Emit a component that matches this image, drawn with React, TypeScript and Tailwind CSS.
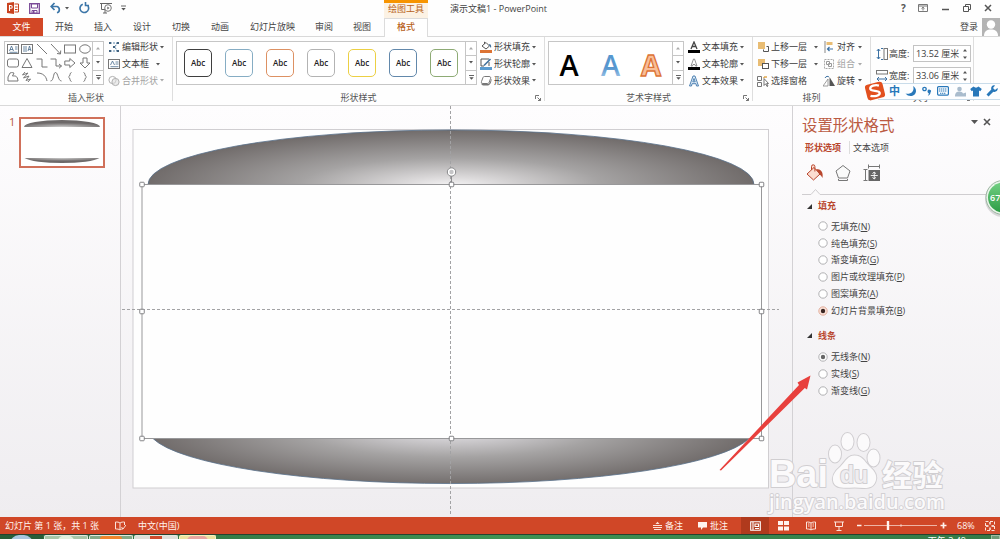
import React from "react";

const FONT = "font-['Open_Sans','Noto_Sans_CJK_SC',sans-serif]";

type IconProps = { w?: number; h?: number; vb?: string; className?: string; children: React.ReactNode };
function Ico({ w = 12, h = 12, vb, className = "", children }: IconProps) {
  return (
    <svg width={w} height={h} viewBox={vb ?? `0 0 ${w} ${h}`} fill="none" stroke="#777" strokeWidth="1" className={"block shrink-0 " + className}>
      {children}
    </svg>
  );
}

function Caret({ c = "#555" }: { c?: string }) {
  return (
    <svg width="4" height="3" viewBox="0 0 4 3" className="block shrink-0">
      <path d="M0 0h4L2 2.4z" fill={c} />
    </svg>
  );
}

type ItemProps = { icon: React.ReactNode; label: string; caret?: boolean; dim?: boolean; gap?: string };
function Item({ icon, label, caret = true, dim = false, gap = "ml-[2px]" }: ItemProps) {
  return (
    <div className={"flex h-[16.800px] items-center " + (dim ? "text-[#a3a3a3]" : "text-[#3c3c3c]")}>
      {icon}
      <span className="ml-[2px] whitespace-nowrap leading-[16px]">{label}</span>
      {caret && (
        <span className={gap}>
          <Caret c={dim ? "#aaa" : "#555"} />
        </span>
      )}
    </div>
  );
}

function Scroller() {
  return (
    <div className="flex w-[11px] shrink-0 flex-col border-l border-[#c6c6c6]">
      <div className="flex flex-1 items-center justify-center border-b border-[#c6c6c6]">
        <svg width="4" height="3"><path d="M0 2.500h4L2 0z" fill="#aaa" /></svg>
      </div>
      <div className="flex flex-1 items-center justify-center border-b border-[#c6c6c6]"><Caret /></div>
      <div className="flex flex-1 items-center justify-center">
        <svg width="5" height="5"><path d="M0 .5h5" stroke="#555" strokeWidth=".9" /><path d="M.3 2.200h4.400L2.500 4.700z" fill="#555" /></svg>
      </div>
    </div>
  );
}

function Launcher() {
  return (
    <svg width="6" height="6" viewBox="0 0 6 6" fill="none" stroke="#666" strokeWidth=".9" className="block">
      <path d="M.5 4V.5H4M2.500 2.500l3 3M5.500 3v2.500H3" />
    </svg>
  );
}

type GroupProps = { w: string; label: string; launcher?: boolean; children: React.ReactNode };
function Group({ w, label, launcher = false, children }: GroupProps) {
  return (
    <div className={"flex shrink-0 flex-col pt-[2px] " + w}>
      <div className="flex h-[52px] items-start">{children}</div>
      <div className="mt-[1px] grid h-[12px] grid-cols-[9px_1fr_9px] items-center text-center text-[#555]">
        <span />
        <span className="leading-[12px]">{label}</span>
        {launcher && <Launcher />}
      </div>
    </div>
  );
}

function Divider() {
  return <div className="h-[64px] w-px shrink-0 self-start bg-[#dedede]" />;
}

function ShapeGallery() {
  const shapes = [
    <g key="a"><rect x=".5" y="1.500" width="11" height="9" /><path d="M2.500 8l2-5 2 5M3 6.500h3M8 4h2.500M8 6h2.500M2.500 9.300h8" stroke="#476c8e" strokeWidth=".8" /></g>,
    <g key="b"><rect x=".5" y="1.500" width="11" height="9" /><path d="M3 3v6M5 3v6M7 8l1.500-5L10 8M7.500 6.500h2" stroke="#476c8e" strokeWidth=".8" /></g>,
    <path key="c" d="M1 1l10 10" />,
    <path key="d" d="M1 1l9.500 10M7 10.500l3.500.5.2-3.500" />,
    <rect key="e" x=".5" y="2" width="11" height="8" />,
    <ellipse key="f" cx="6" cy="6" rx="5.300" ry="4.200" />,
    <rect key="g" x=".5" y="2" width="11" height="8" rx="2" />,
    <path key="h" d="M6 1.500L11 10.500H1z" />,
    <path key="i" d="M.5 2H6v8h5.500" />,
    <path key="j" d="M.5 2H6v7h5.500M9 7l2.500 2L9 11.300" />,
    <path key="k" d="M.8 4h5V1.500L11 6l-5.200 4.500V8h-5z" />,
    <path key="l" d="M4 1v5H1l5 5 5-5H8V1z" />,
    <path key="m" d="M3 2c2-1 4 0 4 0L5.500 5c2 0 5-1 5.500 5H1V6z" />,
    <path key="n" d="M4 1L1.500 4 7 2 2.500 7 8 5 5 9.500 9.500 8 7 11" />,
    <path key="o" d="M1 2c6 0 9 3 10 8" />,
    <path key="p" d="M.5 10C4 10 3 1.500 5.500 1.500S8 10 11.500 10" />,
    <path key="q" d="M7.500 1.500C5.500 1.500 6.500 5.500 4.500 6c2 .5 1 4.500 3 4.500" />,
    <path key="r" d="M4.500 1.500c2 0 1 4 3 4.500-2 .5-1 4.500-3 4.500" />,
  ];
  return (
    <div className="ml-[4px] mt-[2px] flex h-[44px] w-[100px] border border-[#c6c6c6] bg-white">
      <div className="grid flex-1 grid-cols-6 grid-rows-3 place-items-center pl-[1px]">
        {shapes.map((s, i) => (
          <Ico key={i} vb="0 0 12 12" w={12} h={12}>{s}</Ico>
        ))}
      </div>
      <Scroller />
    </div>
  );
}

const PRESETS = ["border-[#3f3f3f]", "border-[#86adc4]", "border-[#dd9163]", "border-[#b3b3b3]", "border-[#ecd044]", "border-[#6288ab]", "border-[#8eab75]"];

function RibbonBody() {
  return (
    <div className="flex h-[70px] shrink-0 border-y border-[#d9d9d9] bg-[#fefefe] text-[9px]">
      <Group w="w-[172px]" label="插入形状">
        <ShapeGallery />
        <div className="ml-[4px] flex flex-col">
          <Item label="编辑形状" icon={<Ico><path d="M2 2h7l-2 4 2 4H3" stroke="#5d86a8" strokeDasharray="2 1" /><path d="M1 1h2v2H1zM9 1h2v2H9zM9 9h2v2H9zM1 9h2v2H1zM5 5h2v2H5z" fill="#41627f" stroke="none" /></Ico>} />
          <Item label="文本框" gap="ml-[7px]" icon={<Ico><rect x=".5" y="1.500" width="11" height="9" /><path d="M2.500 7l2-4 2 4M7.500 4h3M7.500 6h3M2.500 8.700h8" stroke="#476c8e" strokeWidth=".8" /></Ico>} />
          <Item label="合并形状" dim icon={<Ico><circle cx="4.500" cy="5" r="3.600" stroke="#b0b0b0" /><circle cx="7.500" cy="7" r="3.600" stroke="#b0b0b0" fill="#ddd" fillOpacity=".6" /></Ico>} />
        </div>
      </Group>
      <Divider />
      <Group w="w-[371px]" label="形状样式" launcher>
        <div className="ml-[3px] mt-[2px] flex h-[44px] w-[301px] border border-[#c6c6c6] bg-white">
          <div className="flex flex-1 items-center gap-[13px] pl-[7px]">
            {PRESETS.map((p) => (
              <div key={p} className={"flex size-[28px] items-center justify-center rounded-[5px] border text-[8px] font-semibold text-[#222] " + p}>Abc</div>
            ))}
          </div>
          <Scroller />
        </div>
        <div className="ml-[3px] flex flex-col">
          <Item label="形状填充" icon={<Ico><path d="M2 5l4-3.500L9.500 5 6 8zM4.500 3V.8" stroke="#555" /><path d="M9 3c2 0 2.500 2 2 4L9.500 5z" fill="#41719c" stroke="none" /><path d="M0 9h12v3H0z" fill="#dc7334" stroke="none" /></Ico>} />
          <Item label="形状轮廓" icon={<Ico><path d="M9 1H1v7h3M9 4v4" stroke="#555" /><path d="M4 7.500L10.500 1" stroke="#41719c" strokeWidth="1.600" /><path d="M0 9h12v3H0z" fill="#5a9bd0" stroke="none" /></Ico>} />
          <Item label="形状效果" icon={<Ico><path d="M4.500 1.500h4.500c1.500 0 2 .8 1.500 2L9.300 7c-.4 1-1 1.500-2 1.500H3c-1.500 0-2-1-1.500-2L3 2.500c.3-.7.700-1 1.500-1z" fill="#fff" /><path d="M1.300 7.500C1 9.500 2 10.500 3.500 10.500H8c2 0 4-4 3.500-7l-1.700 4c-.5 1-1.300 1.500-2.300 1.500H3c-1 0-1.500-.5-1.700-1.500z" fill="#777" stroke="none" /></Ico>} />
        </div>
      </Group>
      <Divider />
      <Group w="w-[207px]" label="艺术字样式" launcher>
        <div className="ml-[3px] mt-[2px] flex h-[44px] w-[136px] border border-[#c6c6c6] bg-white">
          <svg width="123" height="42" viewBox="0 0 123 42" className="block shrink-0 font-['Open_Sans',sans-serif] text-[29px]" textAnchor="middle" fontWeight="600">
            <defs>
              <linearGradient id="blueA" x1="0" y1="0" x2="0" y2="1"><stop offset=".6" stopColor="#5797cf" /><stop offset=".8" stopColor="#8fbbe2" /></linearGradient>
            </defs>
            <text x="20" y="33.500" fill="#000">A</text>
            <text x="61.500" y="33.500" fill="url(#blueA)">A</text>
            <text x="102" y="33.500" fill="#f8be98" stroke="#dd7335" strokeWidth="1.300" fontWeight="700">A</text>
          </svg>
          <Scroller />
        </div>
        <div className="ml-[4px] flex flex-col">
          <Item label="文本填充" icon={<Ico><path d="M3 8l3-7 3 7M4 5.500h4" stroke="#444" strokeWidth="1.300" /><path d="M0 9h12v3H0z" fill="#000" stroke="none" /></Ico>} />
          <Item label="文本轮廓" icon={<Ico><path d="M3 8l2.500-7h1L9 8H7.500L7 6.500H5L4.500 8z" stroke="#777" strokeWidth=".8" /><path d="M0 9h12v3H0z" fill="#000" stroke="none" /></Ico>} />
          <Item label="文本效果" icon={<Ico><path d="M1.500 11L5 1h2l3.500 10H8.500L8 8.700H4L3.500 11zM4.800 6.800h2.400L6 3.500z" stroke="#3f77ab" fill="#e3eef8" strokeWidth=".9" /></Ico>} />
        </div>
      </Group>
      <Divider />
      <Group w="w-[117px]" label="排列">
        <div className="ml-[4px] flex flex-col">
          <Item label="上移一层" gap="ml-[7px]" icon={<Ico><path d="M1 1h7v7H1z" fill="#e9bd74" stroke="none" /><path d="M9.500 5.500h2v5h-5v-2" stroke="#555" /></Ico>} />
          <Item label="下移一层" gap="ml-[7px]" icon={<Ico><path d="M1 1h7v7H1z" fill="#e9bd74" stroke="none" /><rect x="5.500" y="5.500" width="6" height="5" fill="#fff" stroke="#555" /></Ico>} />
          <Item label="选择窗格" caret={false} icon={<Ico><path d="M.5 1.500h4v4h-4zM.5 7.500h4v4h-4z" /><path d="M7 2h3M7 2v1" stroke="#e0a850" strokeWidth="1.500" /><path d="M7 3.500v7l1.700-1.700 1.300 2.700 1-.5-1.300-2.500H11.500z" fill="#fff" stroke="#555" strokeWidth=".8" /></Ico>} />
        </div>
        <div className="ml-[5px] flex flex-col">
          <Item label="对齐" gap="ml-[3px]" icon={<Ico><path d="M2 0v12" stroke="#888" /><path d="M3.500 1h6v3h-6z" fill="#e9bd74" stroke="none" /><path d="M10 8H4.500M6.500 6l-2 2 2 2" stroke="#3c71a3" strokeWidth="1.200" /></Ico>} />
          <Item label="组合" dim gap="ml-[3px]" icon={<Ico><rect x="1.500" y="1.500" width="9" height="9" stroke="#aaa" strokeDasharray="2 1" /><path d="M3.500 3.500h3v3h-3zM5.500 5.500h3v3h-3z" stroke="#999" /></Ico>} />
          <Item label="旋转" gap="ml-[3px]" icon={<Ico><path d="M5 4v7H0z" stroke="#888" strokeWidth=".8" /><path d="M6.500 2v9H12z" fill="#555" stroke="none" /><path d="M2 3c1-2 3-2 4-1" stroke="#3c71a3" /></Ico>} />
        </div>
      </Group>
      <Divider />
      <Group w="w-[102px]" label="大小" launcher>
        <div className="ml-[5px] mt-[6px] flex flex-col gap-[5px]">
          {[["高度:", "13.52 厘米"], ["宽度:", "33.06 厘米"]].map(([k, v], i) => (
            <div key={k} className="flex h-[17px] items-center text-[#3c3c3c]">
              {i === 0 ? (
                <Ico><path d="M2.500 1v10M.8 3l1.700-2 1.700 2M.8 9l1.700 2 1.700-2M5 .5h2M5 11.500h2" stroke="#3c71a3" /><rect x="8" y=".5" width="3.500" height="11" /></Ico>
              ) : (
                <Ico><rect x=".5" y=".5" width="11" height="3.500" /><path d="M1 9h10M3 7L1 9l2 2M9 7l2 2-2 2" stroke="#3c71a3" /></Ico>
              )}
              <span className="ml-[1px] w-[24px]">{k}</span>
              <div className="flex h-[17px] w-[58px] items-center justify-between border border-[#c3c3c3] bg-white pl-[2px] pr-[3px]">
                <span className="whitespace-nowrap text-[9px]">{v}</span>
                <svg width="4" height="10" viewBox="0 0 4 10"><path d="M0 2.500h4L2 0zM0 7.500h4L2 10z" fill="#555" /></svg>
              </div>
            </div>
          ))}
        </div>
      </Group>
      <Divider />
    </div>
  );
}

function TitleBar() {
  return (
    <div className="flex h-[18px] shrink-0 items-start text-[9px]">
      <div className="flex h-[16px] w-[384px] items-center pl-[7px]">
        <Ico w={12} h={12}><path d="M0 1l7-1v12L0 11z" fill="#c9421f" stroke="none" /><path d="M7.500 2h4v8h-4M8 5h2.500M8 7.500h2.500" stroke="#c9421f" /><path d="M2.500 9V3.500h1.300a1.400 1.400 0 010 2.800H2.500" stroke="#fff" strokeWidth="1.100" /></Ico>
        <Ico w={11} h={11} className="ml-[10px]"><path d="M.7.7h9.600v9.600H.7z" stroke="#7a4a97" strokeWidth="1.300" /><path d="M2.500 1h6v4h-6zM3 7.500h5V10H3z" fill="#fff" stroke="#7a4a97" /><path d="M4 8h1.500v2H4z" fill="#7a4a97" stroke="none" /></Ico>
        <Ico w={12} h={12} className="ml-[10px]"><path d="M1.500 4.500H7a3.300 3.300 0 010 6.300M4.500 1L1.200 4.500 4.500 8" stroke="#3c76a8" strokeWidth="1.700" /></Ico>
        <span className="ml-[3px]"><Caret /></span>
        <Ico w={11} h={12} className="ml-[10px]"><path d="M3.800 2.200A4.300 4.300 0 109 4M6.500 0v3.500H10" stroke="#3c76a8" strokeWidth="1.600" /></Ico>
        <Ico w={13} h={12} className="ml-[10px]"><path d="M0 1.500h12M1.500 2v5.500H5M5 8v3M3 11h4" stroke="#666" /><circle cx="8" cy="6" r="3.300" stroke="#777" fill="#fff" /><path d="M7.300 4.500v3L9.500 6z" fill="#666" stroke="none" /></Ico>
        <svg width="5" height="6" className="ml-[8px] block"><path d="M0 1h5" stroke="#555" strokeWidth=".9" /><path d="M.3 3h4.400L2.500 5.500z" fill="#555" /></svg>
      </div>
      <div className="h-[18px] w-[44px] border-t-[3px] border-[#f79400] bg-[#fcf2e4] text-center leading-[12px] text-[#b8621b]">绘图工具</div>
      <span className="ml-[22px] flex-1 leading-[17px] text-[#444]">演示文稿1 - PowerPoint</span>
      <div className="flex h-[16px] items-center text-[#555]">
        <span className="w-[17px] text-[10px] font-bold leading-[16px]">?</span>
        <Ico w={10} h={8}><path d="M.5.5h9v7h-9zM.5 2h9M5 6.500V3.200M3.500 4.600L5 3.200l1.500 1.400" /></Ico>
        <Ico w={7} h={8} className="ml-[14px]"><path d="M0 5.500h7" strokeWidth="1.500" stroke="#555" /></Ico>
        <Ico w={8} h={8} className="ml-[14px]"><path d="M.5 2.500h5v5h-5zM2.500 2V.5h5v5H6" stroke="#555" /></Ico>
        <Ico w={8} h={8} className="ml-[13px] mr-[8px]"><path d="M1 1l6 6M7 1L1 7" strokeWidth="1.500" stroke="#555" /></Ico>
      </div>
    </div>
  );
}

function Tabs() {
  return (
    <div className="flex h-[18px] shrink-0 items-center text-[9px] leading-[16px] text-[#444]">
      <div className="h-[18px] w-[43px] bg-[#d24726] text-center leading-[17px] text-white">文件</div>
      <div className="flex w-[341px] pl-[12px]">
        <div className="flex gap-[21px]">
          {["开始", "插入", "设计", "切换", "动画"].map((t) => <span key={t}>{t}</span>)}
        </div>
        <div className="ml-[21px] flex gap-[20px]">
          {["幻灯片放映", "审阅", "视图"].map((t) => <span key={t}>{t}</span>)}
        </div>
      </div>
      <div className="z-10 -mb-[1px] h-[19px] w-[44px] border-x border-t border-[#dcdcdc] bg-white text-center font-medium leading-[16px] text-[#b8621b]">格式</div>
      <span className="ml-auto">登录</span>
      <svg width="18" height="18" viewBox="0 0 18 18" className="ml-[4px] block">
        <path d="M0 0h18v18H0z" fill="#b4b4b4" /><circle cx="9" cy="6.500" r="4.200" fill="#fff" /><path d="M2 18c0-5 3-6.500 7-6.500s7 1.500 7 6.500z" fill="#fff" />
      </svg>
    </div>
  );
}

function Thumbnail() {
  return (
    <aside className="flex w-[121px] shrink-0 items-start border-r border-[#d3d1d4] pl-[9px] pt-[11px]">
      <span className="w-[10px] text-[11px] leading-[10px] text-[#b5573e]">1</span>
      <div className="h-[51px] w-[86px] border-2 border-[#d0705a] bg-white">
        <svg width="82" height="47" viewBox="0 0 82 47" className="block">
          <defs>
            <radialGradient id="ta" cx=".5" cy="1" r=".6"><stop offset="0" stopColor="#ccc" /><stop offset="1" stopColor="#6d6969" /></radialGradient>
            <radialGradient id="tb" cx=".5" cy="0" r=".6"><stop offset="0" stopColor="#ccc" /><stop offset="1" stopColor="#6d6969" /></radialGradient>
          </defs>
          <path d="M3 8A38 7 0 0179 8z" fill="url(#ta)" />
          <path d="M3.500 39A39 7 0 0078.500 39z" fill="url(#tb)" />
        </svg>
      </div>
    </aside>
  );
}

function SlideCanvas() {
  const handles = [[142, 184.5], [451.5, 184.5], [761.5, 184.5], [142, 311.5], [761.5, 311.5], [142, 438.5], [451.5, 438.5], [761.5, 438.5]];
  return (
    <svg width="671" height="411" viewBox="121 106 671 411" className="block shrink-0">
      <defs>
        <radialGradient id="ga" gradientUnits="userSpaceOnUse" cx="0" cy="0" r="1" gradientTransform="translate(451 186) scale(303 56)">
          <stop offset="0" stopColor="#f6f5f6" /><stop offset=".15" stopColor="#dddbdc" /><stop offset=".5" stopColor="#a5a3a3" /><stop offset="1" stopColor="#716c6b" />
        </radialGradient>
        <radialGradient id="gb" gradientUnits="userSpaceOnUse" cx="0" cy="0" r="1" gradientTransform="translate(451 429) scale(303 56)">
          <stop offset="0" stopColor="#f6f5f6" /><stop offset=".2" stopColor="#cfcdd0" /><stop offset=".5" stopColor="#a5a3a3" /><stop offset="1" stopColor="#716c6b" />
        </radialGradient>
      </defs>
      <rect x="133" y="129.500" width="635.500" height="358.500" fill="#fefefe" stroke="#d0ced1" />
      <path d="M148 184.500A303 54.500 0 01754 184.500z" fill="url(#ga)" />
      <path d="M148 184.500A303 54.500 0 01754 184.500" fill="none" stroke="#58708a" strokeWidth=".8" />
      <path d="M153 438.500A303 55 0 00749 438.500z" fill="url(#gb)" />
      <path d="M153 438.500A303 55 0 00749 438.500" fill="none" stroke="#58708a" strokeWidth=".8" />
      <rect x="142" y="184.500" width="619.500" height="254" fill="#fefefe" stroke="#98989a" />
      <path d="M450.500 106v410" stroke="#a2a2a4" strokeDasharray="3 2" />
      <path d="M122 309.500h657" stroke="#a2a2a4" strokeDasharray="3 2" />
      <path d="M451.500 176v6" stroke="#8d8d8f" />
      <circle cx="451.500" cy="172" r="4.200" fill="#c5c5c7" stroke="#8a8a8c" strokeWidth="1" />
      <circle cx="451.500" cy="172" r="2.900" fill="none" stroke="#fff" strokeWidth="1.400" />
      {handles.map(([x, y], i) => (
        <rect key={i} x={x - 2.25} y={y - 2.25} width="4.500" height="4.500" rx=".8" fill="#fff" stroke="#77777a" strokeWidth=".9" />
      ))}
    </svg>
  );
}

type Opt = { t: string; k: string; on?: "hot" | "plain" };
function Radios({ items }: { items: Opt[] }) {
  return (
    <div className="flex flex-col pl-[25px]">
      {items.map((o) => (
        <div key={o.t} className="flex h-[16.9px] items-center text-[#444]">
          <svg width="10" height="10" viewBox="0 0 10 10" className="mr-[3px] block shrink-0">
            <circle cx="5" cy="5" r="4.200" fill={o.on === "hot" ? "#fbe3da" : "#fff"} stroke={o.on === "hot" ? "#e0a793" : "#a9a9ab"} strokeWidth=".9" />
            {o.on && <circle cx="5" cy="5" r="2.200" fill={o.on === "hot" ? "#3a2622" : "#666"} />}
          </svg>
          <span className="whitespace-nowrap">{o.t}(<u className="underline-offset-1">{o.k}</u>)</span>
        </div>
      ))}
    </div>
  );
}

function SectionHead({ t }: { t: string }) {
  return (
    <div className="flex h-[14px] items-center pl-[14px] font-bold text-[#b9472e]">
      <svg width="5" height="5" className="mr-[6px] block"><path d="M5 0v5H0z" fill="#333" /></svg>
      {t}
    </div>
  );
}

function FormatPane() {
  return (
    <aside className="flex min-w-0 flex-1 flex-col border-l border-[#d3d1d4] text-[9px]">
      <div className="mt-[10px] flex h-[20px] items-center pl-[9px]">
        <span className="text-[15.4px] leading-[20px] text-[#bb5a42]">设置形状格式</span>
        <svg width="7" height="4" className="mb-[8px] ml-auto block"><path d="M0 0h7L3.500 4z" fill="#555" /></svg>
        <Ico w={8} h={8} className="mb-[8px] ml-[5px] mr-[9px]"><path d="M1 1l6 6M7 1L1 7" stroke="#555" strokeWidth="1.600" /></Ico>
      </div>
      <div className="mt-[5px] flex h-[13px] items-center pl-[12px] leading-[13px]">
        <span className="font-bold text-[#b9472e]">形状选项</span>
        <span className="ml-[8px] border-l border-[#ddd] pl-[3px] text-[#444]">文本选项</span>
      </div>
      <div className="mt-[9px] flex h-[20px] items-center pl-[13px]">
        <Ico w={18} h={18}><path d="M1 10l7-6.500L14 10l-6.500 6zM5.500 6V2.500a1.700 1.700 0 013.400 0v5" stroke="#b9472e" fill="#fbdcd0" /><path d="M10 5c5 0 7.500 3 6.500 9-1-2-2-3-3-3.500z" fill="#b9472e" stroke="none" /></Ico>
        <Ico w={16} h={18} className="ml-[11px]"><path d="M8 1.500l7 5.500-2.500 7h-9L1 7z" fill="#fafafa" /><path d="M3.500 16.500v-1.500M12.500 16.500v-1.500M3.500 16.500h9" /></Ico>
        <Ico w={17} h={18} className="ml-[12px]"><path d="M2.500 5.500v11M.5 5.500h4M.5 16.500h4M5.500 2.500h11M5.500.5v4M16.500.5v4" /><path d="M5.500 6H17v11H5.500z" fill="#666" stroke="none" /><path d="M11.250 8v7M7.750 11.500h7M9.500 9.700l1.700-1.700L13 9.700M9.500 13.300l1.700 1.700 1.800-1.700" stroke="#fff" strokeWidth=".9" /></Ico>
      </div>
      <svg width="208" height="9" viewBox="0 0 208 9" className="mt-[4px] block"><path d="M9 7.500h9l4.500-5 4.500 5h181" fill="none" stroke="#cfcdd0" /></svg>
      <div className="mt-[3px]"><SectionHead t="填充" /></div>
      <div className="mt-[5px]">
        <Radios items={[{ t: "无填充", k: "N" }, { t: "纯色填充", k: "S" }, { t: "渐变填充", k: "G" }, { t: "图片或纹理填充", k: "P" }, { t: "图案填充", k: "A" }, { t: "幻灯片背景填充", k: "B", on: "hot" }]} />
      </div>
      <div className="mt-[9px]"><SectionHead t="线条" /></div>
      <div className="mt-[6px]">
        <Radios items={[{ t: "无线条", k: "N", on: "plain" }, { t: "实线", k: "S" }, { t: "渐变线", k: "G" }]} />
      </div>
    </aside>
  );
}

function StatusBar() {
  return (
    <div className="flex h-[17px] shrink-0 items-center bg-[#d04727] text-[9px] leading-[16px] text-[#fff3ee]">
      <span className="w-[110px] whitespace-nowrap pl-[5px]">幻灯片 第 1 张，共 1 张</span>
      <Ico w={11} h={10} className="ml-[5px]"><path d="M5 9V2C4 1 2 1 .5 1v7C2 8 4 8 5 9c1-1 2-1 3-1M5 2c1-1 3-1 4.500-1v3M6.500 6l1.500 2 3-4" stroke="#fbe3da" /></Ico>
      <span className="ml-[12px]">中文(中国)</span>
      <div className="ml-auto flex h-full items-center">
        <Ico w={9} h={9}><path d="M0 4.500h9M0 6.500h9M1 8.500h7" stroke="#fbe3da" /><path d="M2.500 3L4.500.8 6.500 3z" fill="#fbe3da" stroke="none" /></Ico>
        <span className="ml-[3px]">备注</span>
        <svg width="9" height="9" className="ml-[15px] block"><path d="M0 1h9v5.500H5L3 9V6.500H0z" fill="#fff3ee" /></svg>
        <span className="ml-[3px]">批注</span>
        <div className="ml-[13px] flex h-full w-[28px] items-center justify-center bg-[#b03a1d]">
          <Ico w={11} h={10}><path d="M.7.7h9.600v8.600H.7zM3 .7v8.600M5 3h3.500v2.500H5zM5 7.500h4" stroke="#fff" strokeWidth="1.100" /></Ico>
        </div>
        <svg width="11" height="10" className="ml-[9px] block"><path d="M0 0h5v4H0zM6 0h5v4H6zM0 5.500h5v4H0zM6 5.500h5v4H6z" fill="#fff3ee" /></svg>
        <Ico w={10} h={10} className="ml-[17px]"><path d="M5 9V2C4 1 2 1 .5 1v7C2 8 4 8 5 9c1-1 3-1 4.500-1V1C8 1 6 1 5 2M2 3h1.500M2 5h1.500M6.500 3H8M6.500 5H8" stroke="#fbe3da" /></Ico>
        <Ico w={10} h={10} className="ml-[18px]"><path d="M0 1h10M1.500 1v4.500h7V1M5 6v3M2.500 9.500h5" stroke="#fbe3da" /></Ico>
        <svg width="90" height="11" viewBox="0 0 90 11" className="ml-[13px] block" fill="none" stroke="#fff3ee">
          <path d="M0 5.500h4.500M83.500 5.500h6M86.500 2.500v6" strokeWidth="1.700" />
          <path d="M7 5.500h73M44 4v3" strokeWidth=".8" opacity=".8" />
          <path d="M31 1v9" strokeWidth="2.400" />
        </svg>
        <span className="ml-[10px] w-[28px]">68%</span>
        <Ico w={10} h={10} className="mr-[5px]"><path d="M.5.5h9v9h-9z" stroke="#fbe3da" strokeDasharray="3 1.500" /><path d="M5 1v2.500M5 9V6.500M1 5h2.500M9 5H6.500" stroke="#fff" strokeWidth="1.300" /></Ico>
      </div>
    </div>
  );
}

function TaskBar() {
  const btn = "h-[6px] w-[44px] overflow-hidden rounded-t-[2px] border-x border-t border-[#dfe9df] px-[13px] ";
  return (
    <div className="flex h-[5px] shrink-0 gap-px overflow-hidden border-t border-[#26422d] bg-gradient-to-r from-[#2e6a3e] via-[#3f9354] to-[#347947]">
      <div className="h-[5px] w-[43px] bg-[#285d38] px-[10px]"><div className="h-[18px] rounded-full bg-[#a9c6de]" /></div>
      <div className={btn + "bg-[#a8c6a8]"}><div className="h-[10px] rounded-full bg-[#e1f0de]" /></div>
      <div className={btn + "bg-[#83a987]"}><div className="ml-[-3px] h-[10px] w-[22px] rounded-[3px] bg-[#f0842c]" /></div>
      <div className={btn + "bg-[#dedfd9]"}><div className="ml-[2px] h-[10px] w-[12px] bg-[#cf4b2c]" /></div>
      <div className="h-[6px] w-[37px] rounded-t-[2px] border-x border-t border-[#f6f2bf] bg-[#ece3a0] px-[7px]"><div className="h-[10px] rounded-full bg-[#e8a5a0]" /></div>
      <div className="ml-auto mr-[24px] pt-[1px] text-[9px] leading-[9px] text-white">下午 3:49</div>
      <div className="h-[6px] w-[9px] border border-[#9fbfa5] bg-[#6d9a77]" />
    </div>
  );
}

function ImeBar() {
  const b = "#2878ba";
  return (
    <div className="absolute left-[864px] top-[80px] flex h-[22px] w-[136px] items-center">
      <div className="absolute inset-x-0 left-[14px] top-[3px] h-[17px] border-y border-[#c9dcea] bg-[#fdfeff]" />
      <svg width="22" height="22" viewBox="0 0 22 22" className="relative block shrink-0">
        <rect x="2" y="3" width="18" height="16" rx="3" fill="#e2501f" transform="rotate(-14 11 11)" />
        <path d="M15.500 6C12 4.500 6.500 5.500 6.500 8.300c0 3 9 2 9 5 0 3-6 3.400-9.500 2" fill="none" stroke="#fff" strokeWidth="2.300" transform="rotate(-6 11 11)" />
      </svg>
      <div className="relative flex items-center">
        <span className="ml-[3px] w-[11px] text-[11px] font-bold leading-[20px] text-[#2878ba]">中</span>
        <svg width="12" height="12" viewBox="0 0 12 12" className="ml-[5px] block"><path d="M8 1c2 5-2 9-7.500 7.500C4 13 11 11 11 6 11 4 10 2 8 1z" fill={b} /></svg>
        <svg width="10" height="10" viewBox="0 0 10 10" className="ml-[5px] block"><circle cx="2.500" cy="3" r="1.700" fill="none" stroke={b} strokeWidth="1.300" /><path d="M5.500 5.200a1.700 1.700 0 113 1.200C8.500 8 7.500 9.200 5.800 9.700c.8-1 1.200-1.700 1-2.500C6 7 5.500 6.300 5.500 5.200z" fill={b} /></svg>
        <svg width="12" height="10" viewBox="0 0 12 10" className="ml-[5px] block"><rect x=".6" y=".6" width="10.800" height="8.500" rx="1" fill="#fff" stroke={b} strokeWidth="1.200" /><path d="M2 3h8M2 5h8M3 7.200h6" stroke={b} strokeDasharray="1.300 .6" strokeWidth="1.100" /></svg>
        <svg width="11" height="11" viewBox="0 0 11 11" className="ml-[6px] block"><circle cx="4.500" cy="3" r="2.300" fill="#a9bccd" /><path d="M0 10.500c0-4 2-5 4.500-5s3 1 3.500 2l3-1v4z" fill="#a9bccd" /></svg>
        <svg width="12" height="11" viewBox="0 0 12 11" className="ml-[4px] block"><path d="M3.500.5C5 2 7 2 8.500.5L11.800 3l-1.500 2.300L9 4.600v5.900H3V4.600l-1.300.7L.2 3z" fill={b} /></svg>
        <svg width="12" height="12" viewBox="0 0 12 12" className="ml-[4px] block"><path d="M11.500 3L9 5 7 3l2-2.500C6.500-.5 4.500 2 5.300 4.500L.5 9.500l2 2L7.300 6.700C10 7.500 12.500 5.500 11.500 3z" fill={b} /></svg>
      </div>
    </div>
  );
}

function Overlay() {
  return (
    <svg width="300" height="350" viewBox="700 170 300 350" className="pointer-events-none absolute left-[700px] top-[170px] block">
      <defs>
        <linearGradient id="gr" x1="0" y1="0" x2="0" y2="1"><stop offset="0" stopColor="#72d083" /><stop offset="1" stopColor="#2d9c45" /></linearGradient>
      </defs>
      <circle cx="1003" cy="199" r="18" fill="#c9c9cb" opacity=".7" />
      <circle cx="1003" cy="197.500" r="17" fill="#e9f5ea" stroke="#8ba790" strokeWidth=".8" />
      <circle cx="1003" cy="197.500" r="15" fill="url(#gr)" />
      <text x="990" y="200.500" className="font-['Open_Sans',sans-serif]" fontSize="9" fontWeight="600" fill="#fff">67</text>
      <g fill="#fbfafb" stroke="#d0ced1" strokeWidth="2" paintOrder="stroke" strokeLinejoin="round" className="font-['Liberation_Sans','Noto_Sans_CJK_SC',sans-serif]">
        <text x="769" y="487" fontSize="39" fontWeight="700" textLength="59" lengthAdjust="spacingAndGlyphs">Bai</text>
        <ellipse cx="835" cy="454" rx="6" ry="8.500" /><ellipse cx="847.500" cy="441.500" rx="6" ry="8.500" /><ellipse cx="863.500" cy="442.500" rx="6" ry="8.500" /><ellipse cx="873.500" cy="458" rx="6" ry="8.500" />
        <path d="M854.500 455.500c8 0 10 6 15 11 6 5 8 10 6 15-3 9-13 6-21 6s-18 2-21-5c-2-6 1-11 7-16 5-5 7-11 14-11z" />
        <text x="840" y="482.500" fontSize="24" fontWeight="700" textLength="28" lengthAdjust="spacingAndGlyphs" fill="#efedf0">du</text>
        <text x="882" y="485.500" fontSize="30" fontWeight="700" textLength="61" lengthAdjust="spacingAndGlyphs">经验</text>
      </g>
      <text x="769" y="509" fontSize="19" textLength="176" lengthAdjust="spacingAndGlyphs" fill="#fbfafb" stroke="#d2d0d3" strokeWidth="1.800" paintOrder="stroke" className="font-['Open_Sans',sans-serif]" fontWeight="600">jingyan.baidu.com</text>
      <path d="M719.500 470L799 385 797.500 382.500 810.500 375.500 807 389.500 804.800 388 721 470.500z" fill="#e8403d" />
    </svg>
  );
}

export default function App() {
  return (
    <div lang="zh-CN" className={"relative flex h-[539px] w-[1000px] flex-col overflow-hidden bg-[#fefefe] " + FONT}>
      <TitleBar />
      <Tabs />
      <RibbonBody />
      <main className="flex h-[411px] shrink-0 bg-gradient-to-b from-[#fefdfe] to-[#efedf0]">
        <Thumbnail />
        <SlideCanvas />
        <FormatPane />
      </main>
      <StatusBar />
      <TaskBar />
      <ImeBar />
      <Overlay />
    </div>
  );
}
